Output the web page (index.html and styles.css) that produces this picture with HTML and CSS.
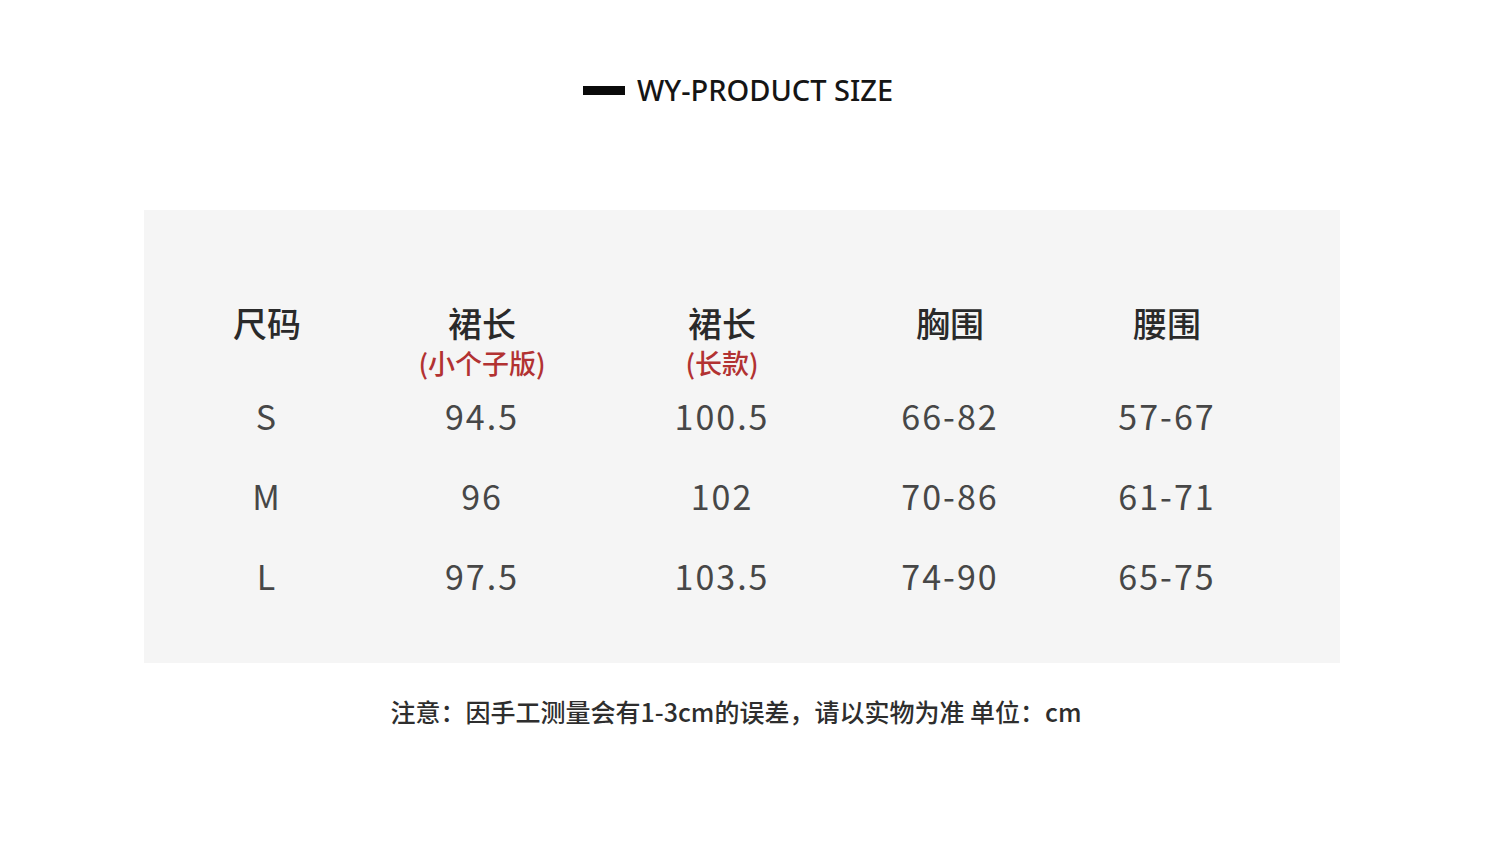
FILE: index.html
```html
<!DOCTYPE html>
<html lang="zh-CN">
<head>
<meta charset="utf-8">
<title>WY-PRODUCT SIZE</title>
<link rel="stylesheet" href="styles.css">
</head>
<body>
<div class="page">
  <div class="title">
    <span class="title-bar"></span>
    <span class="title-text">WY-PRODUCT SIZE</span>
  </div>
  <div class="panel">
    <div class="size-table">
      <div class="cell head"><span class="head-main">尺码</span></div>
      <div class="cell head"><span class="head-main">裙长</span><span class="head-sub">(小个子版)</span></div>
      <div class="cell head"><span class="head-main">裙长</span><span class="head-sub">(长款)</span></div>
      <div class="cell head"><span class="head-main">胸围</span></div>
      <div class="cell head"><span class="head-main">腰围</span></div>

      <div class="cell val">S</div>
      <div class="cell val">94.5</div>
      <div class="cell val">100.5</div>
      <div class="cell val">66-82</div>
      <div class="cell val">57-67</div>

      <div class="cell val">M</div>
      <div class="cell val">96</div>
      <div class="cell val">102</div>
      <div class="cell val">70-86</div>
      <div class="cell val">61-71</div>

      <div class="cell val">L</div>
      <div class="cell val">97.5</div>
      <div class="cell val">103.5</div>
      <div class="cell val">74-90</div>
      <div class="cell val">65-75</div>
    </div>
  </div>
  <p class="note">注意：因手工测量会有1-3cm的误差，请以实物为准 单位：cm</p>
</div>
</body>
</html>
```
FILE: styles.css
```css
html, body {
  margin: 0;
  padding: 0;
  background: #ffffff;
}
body {
  font-family: "Noto Sans CJK SC", "Noto Sans", sans-serif;
  color: #333;
}
.page {
  width: 1196px;
  margin-left: 144px;
  padding-top: 72px;
}
.title {
  display: flex;
  align-items: center;
  justify-content: center;
  gap: 12px;
  height: 36px;
  margin-left: -8px;
}
.title-bar {
  width: 42px;
  height: 9px;
  background: #0a0a0a;
}
.title-text {
  font-family: "Noto Sans", "Noto Sans CJK SC", sans-serif;
  font-size: 29px;
  font-weight: 500;
  color: #151515;
  line-height: 36px;
}
.panel {
  margin-top: 102px;
  background: #f5f5f5;
  height: 453px;
  box-sizing: border-box;
  padding-top: 93px;
  padding-left: 16px;
}
.size-table {
  display: grid;
  grid-template-columns: 214px 216px 264px 192px 242px;
  grid-template-rows: 73px 80px 80px 80px;
}
.cell {
  display: flex;
  flex-direction: column;
  align-items: center;
}
.head-main {
  font-size: 34px;
  font-weight: 500;
  line-height: 40px;
  color: #2a2a2a;
}
.head-sub {
  margin-top: 5px;
  font-size: 27px;
  font-weight: 500;
  line-height: 30px;
  color: #b23232;
}
.val {
  justify-content: center;
  font-size: 34px;
  letter-spacing: 2px;
  color: #474747;
  line-height: 40px;
}
.note {
  margin: 32px 0 0 -12px;
  text-align: center;
  font-size: 25px;
  font-weight: 500;
  line-height: 32px;
  color: #2e2e2e;
}
```
